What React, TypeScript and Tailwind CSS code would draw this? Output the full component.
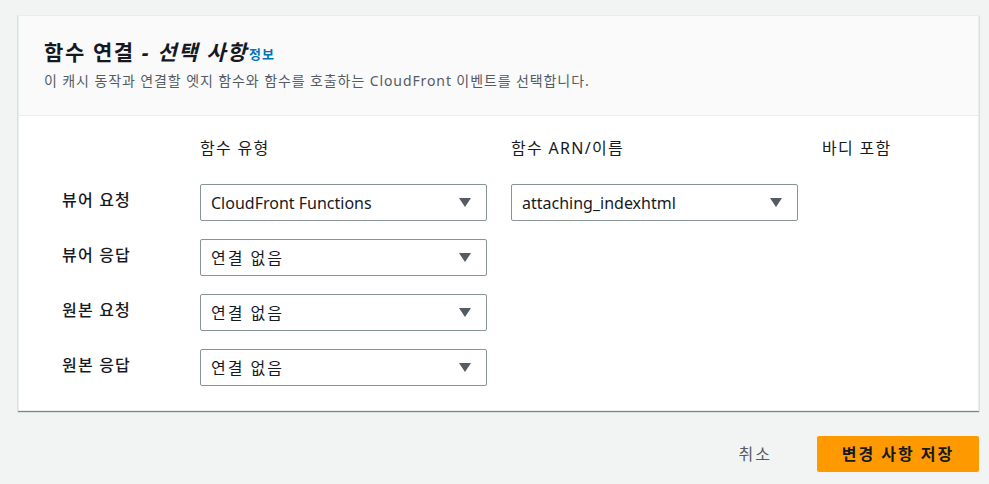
import React from "react";

const font = { fontFamily: '"Noto Sans", "Noto Sans CJK KR", sans-serif' };

function Select({ value, ko }: { value: string; ko?: boolean }) {
  return (
    <div className="w-[287px] h-[37px] border border-[#879596] rounded-[2px] bg-white flex items-center justify-between pl-[10px] pr-[15px]">
      <span className={`text-[16px] text-[#16191f] leading-none ${ko ? "tracking-[2px]" : ""}`}>{value}</span>
      <svg width="12" height="9" viewBox="0 0 12 9">
        <path d="M0 0 L12 0 L6 9 Z" fill="#545b64" />
      </svg>
    </div>
  );
}

export default function App() {
  const rows = [
    { label: "뷰어 요청", type: "CloudFront Functions", arn: "attaching_indexhtml" },
    { label: "뷰어 응답", type: "연결 없음", ko: true },
    { label: "원본 요청", type: "연결 없음", ko: true },
    { label: "원본 응답", type: "연결 없음", ko: true },
  ];
  return (
    <div style={font} className="w-[989px] h-[484px] bg-[#f2f3f3] pt-[15px] pl-[18px] pr-[10px]">
      <div className="bg-white border border-[#eaeded] shadow-[0_1px_1px_0_rgba(0,28,36,0.5)]">
        <div className="bg-[#fafafa] border-b border-[#eaeded] pl-[25px] pt-[22px] pb-[25px]">
          <div className="flex items-end leading-[28px]">
            <span className="text-[21px] font-bold text-[#16191f] tracking-[1.6px]">
              함수 연결 <i>- 선택 사항</i>
            </span>
            <span className="text-[13px] font-bold text-[#0073bb] ml-[1px] leading-[24px] tracking-[1px]">정보</span>
          </div>
          <div className="mt-[6px] text-[14px] leading-[18px] text-[#545b64] tracking-[0.9px]">
            이 캐시 동작과 연결할 엣지 함수와 함수를 호출하는 CloudFront 이벤트를 선택합니다.
          </div>
        </div>
        <div className="pl-[43px] pt-[21px] pb-[24px]">
          <div className="grid grid-cols-[138px_311px_311px_1fr] text-[16px] leading-[22px] text-[#16191f] tracking-[1.3px]">
            <div />
            <div>함수 유형</div>
            <div>함수 ARN/이름</div>
            <div>바디 포함</div>
          </div>
          <div className="mt-[25px] flex flex-col gap-[18px]">
            {rows.map((r) => (
              <div key={r.label} className="grid grid-cols-[138px_311px_311px_1fr] items-center">
                <div className="text-[16px] font-medium text-[#16191f] -mt-[6px] tracking-[1.2px]">{r.label}</div>
                <Select value={r.type} ko={r.ko} />
                <div>{r.arn ? <Select value={r.arn} /> : null}</div>
                <div />
              </div>
            ))}
          </div>
        </div>
      </div>
      <div className="flex justify-end items-center mt-[25px] gap-[45px]">
        <span className="text-[16px] text-[#545b64] tracking-[2px]">취소</span>
        <button className="w-[162px] h-[36px] rounded-[2px] bg-[#ff9900] text-[16px] font-bold text-[#16191f] tracking-[2px]">
          변경 사항 저장
        </button>
      </div>
    </div>
  );
}
